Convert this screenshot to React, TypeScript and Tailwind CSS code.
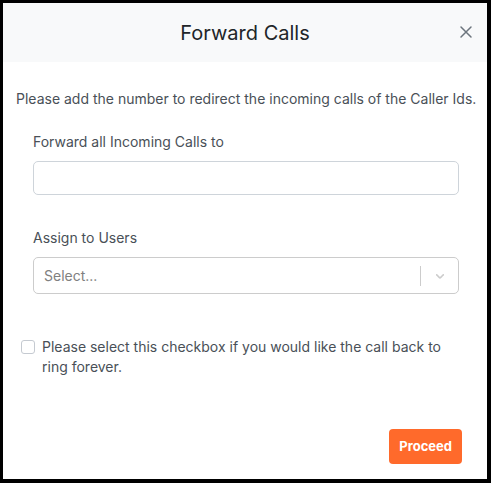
import React from "react";

export default function App() {
  return (
    <div
      className="w-[491px] h-[483px] bg-white border-black border-t-[3px] border-l-[3px] border-r-[4px] border-b-[4px] flex flex-col"
      style={{ fontFamily: "Inter, 'Noto Sans', sans-serif" }}
    >
      <div className="h-[59px] bg-[#f8f9fa] flex items-center justify-center relative shrink-0">
        <h1 className="text-[20px] text-[#212529]">Forward Calls</h1>
        <button className="absolute right-[14px] top-[22px] text-[#6c757d]">
          <svg width="14" height="14" viewBox="0 0 14 14" fill="none" stroke="currentColor" strokeWidth="1.5" strokeLinecap="round">
            <path d="M2 2 L12 12 M12 2 L2 12" />
          </svg>
        </button>
      </div>
      <div className="flex flex-col flex-1 px-[13px]">
        <p className="mt-[27px] text-[14px] text-[#495057] leading-[20px] whitespace-nowrap">
          Please add the number to redirect the incoming calls of the Caller Ids.
        </p>
        <div className="pl-[17px] pr-[15px] mt-[23px]">
          <label className="block text-[14px] text-[#495057] leading-[20px]">Forward all Incoming Calls to</label>
          <input className="mt-[9px] w-full h-[34px] border border-[#ced4da] rounded-[5px] outline-none" />
          <label className="block mt-[33px] text-[14px] text-[#495057] leading-[20px]">Assign to Users</label>
          <div className="mt-[9px] w-full h-[37px] border border-[#cccccc] rounded-[5px] flex items-center">
            <span className="flex-1 pl-[10px] text-[14px] text-[#808080]">Select...</span>
            <span className="w-px h-[20px] bg-[#cccccc]"></span>
            <span className="w-[37px] flex items-center justify-center text-[#cccccc]">
              <svg width="14" height="14" viewBox="0 0 20 20" fill="currentColor">
                <path d="M4.516 7.548c0.436-0.446 1.043-0.481 1.576 0l3.908 3.747 3.908-3.747c0.533-0.481 1.141-0.446 1.574 0 0.436 0.445 0.408 1.197 0 1.615-0.406 0.418-4.695 4.502-4.695 4.502-0.217 0.223-0.502 0.335-0.787 0.335s-0.57-0.112-0.789-0.335c0 0-4.287-4.084-4.695-4.502s-0.436-1.17 0-1.615z" />
              </svg>
            </span>
          </div>
        </div>
        <div className="mt-[43px] flex items-start gap-[7px] pl-[5px]">
          <span className="mt-[3px] w-[14px] h-[14px] border border-[#c5cad1] rounded-[3px] shrink-0 bg-white"></span>
          <span className="text-[14px] text-[#495057] leading-[20px] pr-[28px]">
            Please select this checkbox if you would like the call back to ring forever.
          </span>
        </div>
        <div className="mt-auto mb-[15px] flex justify-end pr-[12px]">
          <button className="h-[35px] px-[10px] bg-[#ff6a2b] text-white text-[13px] font-bold rounded-[4px]">
            Proceed
          </button>
        </div>
      </div>
    </div>
  );
}
